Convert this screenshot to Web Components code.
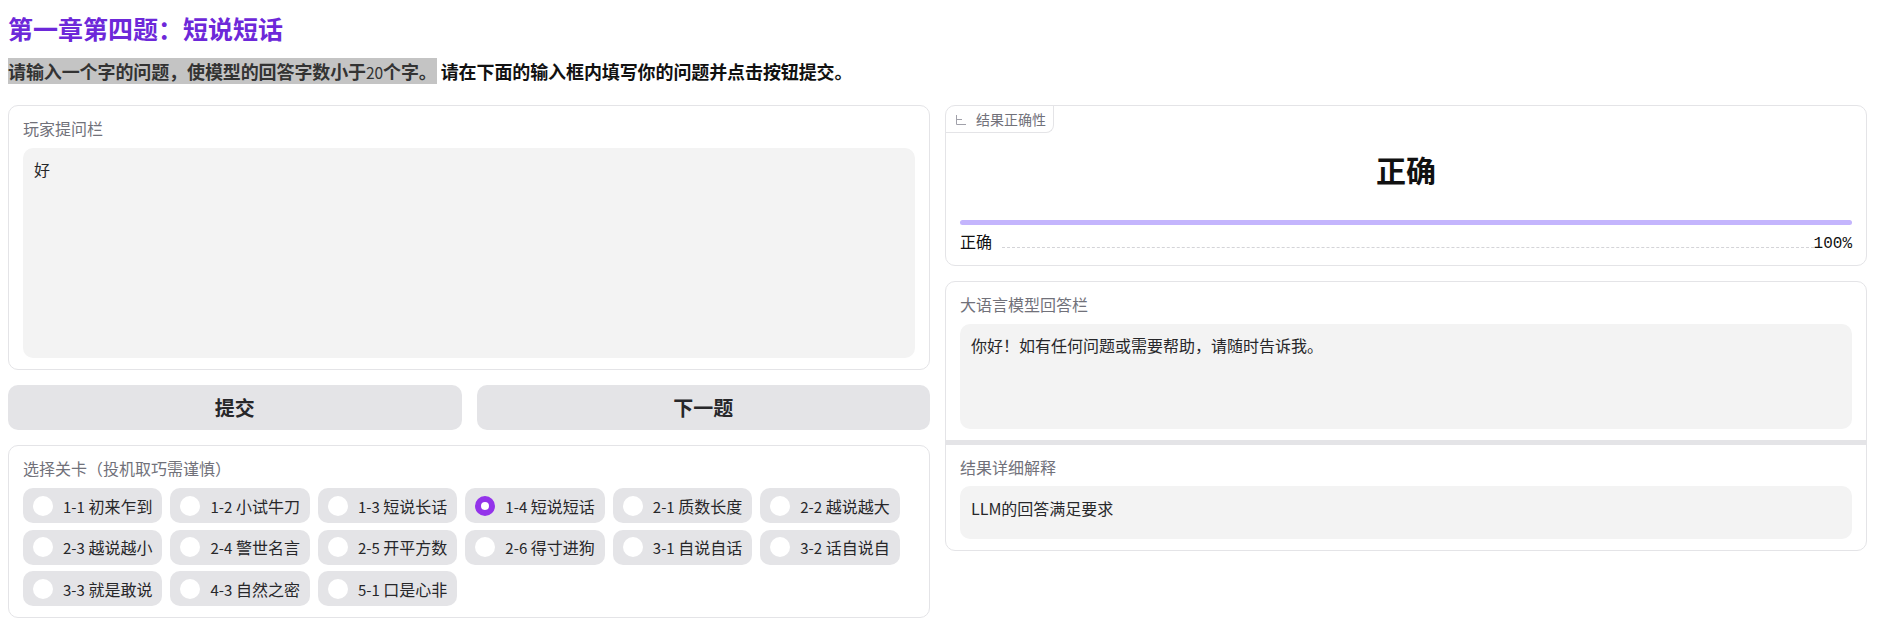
<!DOCTYPE html>
<html lang="zh">
<head>
<meta charset="utf-8">
<title>第一章第四题</title>
<style>
    html, body { margin: 0; background: #fff; }
    body {
        padding: 0 10px 0 8px;
        font-family: "Noto Sans CJK SC", "Noto Sans", sans-serif;
        color: #27272a;
    }
    mark { background: #c4c4c4; color: #333; }
    mark b { font-size: 15.5px; font-weight: 400; }
</style>
</head>
<body>
<quiz-page>
    <span slot="title">第一章第四题：短说短话</span>
    <span slot="prompt"><mark>请输入一个字的问题，使模型的回答字数小于<b>20</b>个字。</mark> 请在下面的输入框内填写你的问题并点击按钮提交。</span>

    <quiz-panel slot="left" style="height:265px">
        <text-field label="玩家提问栏" value="好" grow></text-field>
    </quiz-panel>
    <div slot="left" style="display:grid;grid-template-columns:1fr 1fr;gap:15px">
        <big-button>提交</big-button>
        <big-button>下一题</big-button>
    </div>
    <quiz-panel slot="left">
        <level-picker label="选择关卡（投机取巧需谨慎）" selected="1-4 短说短话"></level-picker>
    </quiz-panel>

    <quiz-panel slot="right">
        <result-label value="正确" percent="100%"></result-label>
    </quiz-panel>
    <quiz-panel slot="right">
        <text-field label="大语言模型回答栏" value="你好！如有任何问题或需要帮助，请随时告诉我。" box-height="105"></text-field>
        <text-field label="结果详细解释" value="LLM的回答满足要求" box-height="53" divided></text-field>
    </quiz-panel>
</quiz-page>

<script>
const borderColor = '#e4e4e7'
const labelColor = '#71717a'
const fieldColor = '#f3f3f3'
const accent = '#9333ea'

class QuizPage extends HTMLElement {
    constructor() {
        super()
        this.attachShadow({mode: 'open'}).innerHTML = `
            <style>
                :host { display: block; }
                h2 {
                    margin: 0;
                    padding-top: 12px;
                    font-size: 25px;
                    line-height: 32px;
                    font-weight: 700;
                    color: #6d28d9;
                }
                p {
                    margin: 0;
                    padding-top: 16px;
                    font-size: 18px;
                    letter-spacing: -0.1px;
                    line-height: 23px;
                    font-weight: 700;
                    color: #111;
                }
                .columns {
                    display: grid;
                    grid-template-columns: 1fr 1fr;
                    column-gap: 15px;
                    margin-top: 21px;
                    align-items: start;
                }
                .column {
                    display: flex;
                    flex-direction: column;
                    gap: 15px;
                }
            </style>
            <h2><slot name="title"></slot></h2>
            <p><slot name="prompt"></slot></p>
            <div class="columns">
                <div class="column"><slot name="left"></slot></div>
                <div class="column"><slot name="right"></slot></div>
            </div>
        `
    }
}

class QuizPanel extends HTMLElement {
    constructor() {
        super()
        this.attachShadow({mode: 'open'}).innerHTML = `
            <style>
                :host {
                    display: flex;
                    flex-direction: column;
                    box-sizing: border-box;
                    border: 1px solid ${borderColor};
                    border-radius: 10px;
                    overflow: hidden;
                    background: #fff;
                }
            </style>
            <slot></slot>
        `
    }
}

class TextField extends HTMLElement {
    constructor() {
        super()
        const boxHeight = this.getAttribute('box-height')
        const divided = this.hasAttribute('divided')
        this.attachShadow({mode: 'open'}).innerHTML = `
            <style>
                :host {
                    display: flex;
                    flex-direction: column;
                    box-sizing: border-box;
                    padding: 9px 14px 11px;
                    ${this.hasAttribute('grow') ? 'flex: 1;' : ''}
                    ${divided ? `border-top: 5px solid ${borderColor};` : ''}
                }
                .label {
                    font-size: 16px;
                    line-height: 26px;
                    color: ${labelColor};
                    margin-bottom: ${divided ? 6 : 7}px;
                }
                .box {
                    ${boxHeight ? `height: ${boxHeight}px;` : 'flex: 1;'}
                    box-sizing: border-box;
                    padding: ${divided ? 9 : 8}px 11px;
                    border-radius: 10px;
                    background: ${fieldColor};
                    font-size: 16px;
                    line-height: 26px;
                    color: #27272a;
                }
            </style>
            <div class="label">${this.getAttribute('label')}</div>
            <div class="box">${this.getAttribute('value')}</div>
        `
    }
}

class BigButton extends HTMLElement {
    constructor() {
        super()
        this.attachShadow({mode: 'open'}).innerHTML = `
            <style>
                :host {
                    display: flex;
                    align-items: center;
                    justify-content: center;
                    height: 45px;
                    border-radius: 10px;
                    background: ${borderColor};
                    font-size: 20px;
                    font-weight: 600;
                    color: #27272a;
                }
            </style>
            <slot></slot>
        `
    }
}

class LevelOption extends HTMLElement {
    constructor() {
        super()
        this.attachShadow({mode: 'open'}).innerHTML = `
            <style>
                :host {
                    display: inline-flex;
                    align-items: center;
                    box-sizing: border-box;
                    height: 35px;
                    padding: 0 10px;
                    gap: 10px;
                    border-radius: 10px;
                    background: ${borderColor};
                    font-size: 16px;
                    color: #27272a;
                    white-space: nowrap;
                }
                .dot {
                    width: 20px;
                    height: 20px;
                    flex: none;
                    border-radius: 50%;
                    background: #fff;
                    box-sizing: border-box;
                }
                :host([checked]) .dot { border: 6px solid ${accent}; }
            </style>
            <span class="dot"></span><span><slot></slot></span>
        `
    }
}

class LevelPicker extends HTMLElement {
    constructor() {
        super()
        const levels = ['1-1 初来乍到', '1-2 小试牛刀', '1-3 短说长话', '1-4 短说短话', '2-1 质数长度', '2-2 越说越大',
            '2-3 越说越小', '2-4 警世名言', '2-5 开平方数', '2-6 得寸进狗', '3-1 自说自话', '3-2 话自说自',
            '3-3 就是敢说', '4-3 自然之密', '5-1 口是心非']
        const selected = this.getAttribute('selected')
        const option = l => {
            const [num, name] = l.split(' ')
            return `<level-option ${l === selected ? 'checked' : ''}><span class="num">${num}</span> ${name}</level-option>`
        }
        this.attachShadow({mode: 'open'}).innerHTML = `
            <style>
                :host {
                    display: block;
                    padding: 9px 14px 11px;
                }
                .label {
                    font-size: 16px;
                    line-height: 26px;
                    color: ${labelColor};
                    margin-bottom: 7px;
                }
                .options {
                    display: flex;
                    flex-wrap: wrap;
                    gap: 6.5px 8px;
                }
                .num { font-size: 15px; }
            </style>
            <div class="label">${this.getAttribute('label')}</div>
            <div class="options">${levels.map(option).join('')}</div>
        `
    }
}

class ResultLabel extends HTMLElement {
    constructor() {
        super()
        const value = this.getAttribute('value')
        this.attachShadow({mode: 'open'}).innerHTML = `
            <style>
                :host {
                    display: block;
                    position: relative;
                    height: 159px;
                    box-sizing: border-box;
                }
                .tab {
                    position: absolute;
                    left: 0;
                    top: 0;
                    display: flex;
                    align-items: center;
                    gap: 10px;
                    box-sizing: border-box;
                    height: 27px;
                    padding: 0 7px 0 9px;
                    border-right: 1px solid ${borderColor};
                    border-bottom: 1px solid ${borderColor};
                    border-bottom-right-radius: 8px;
                    font-size: 14px;
                    color: ${labelColor};
                }
                svg { width: 11px; height: 11px; color: #a1a1aa; }
                .value {
                    padding-top: 39px;
                    height: 114px;
                    box-sizing: border-box;
                    text-align: center;
                    font-size: 30px;
                    line-height: 48px;
                    font-weight: 700;
                    color: #111;
                }
                .bar {
                    height: 5px;
                    margin: 0 14px;
                    border-radius: 3px;
                    background: #c4b5fd;
                }
                .row {
                    display: flex;
                    align-items: baseline;
                    margin: 4px 14px 0;
                    font-size: 16px;
                    line-height: 24px;
                    color: #111;
                }
                .dots {
                    flex: 1;
                    margin: 0 0 0 10px;
                    border-bottom: 1px dashed #d4d4d8;
                }
                .pct { font-family: "Liberation Mono", monospace; font-size: 16px; }
            </style>
            <div class="tab">
                <svg viewBox="0 0 11 11" fill="none" stroke="currentColor" stroke-width="1">
                    <path d="M1.5 1V10.5H11M1.5 5.5H7"></path>
                </svg>
                <span>结果正确性</span>
            </div>
            <div class="value">${value}</div>
            <div class="bar"></div>
            <div class="row"><span>${value}</span><span class="dots"></span><span class="pct">${this.getAttribute('percent')}</span></div>
        `
    }
}

customElements.define('quiz-page', QuizPage)
customElements.define('quiz-panel', QuizPanel)
customElements.define('text-field', TextField)
customElements.define('big-button', BigButton)
customElements.define('level-option', LevelOption)
customElements.define('level-picker', LevelPicker)
customElements.define('result-label', ResultLabel)
</script>
</body>
</html>
